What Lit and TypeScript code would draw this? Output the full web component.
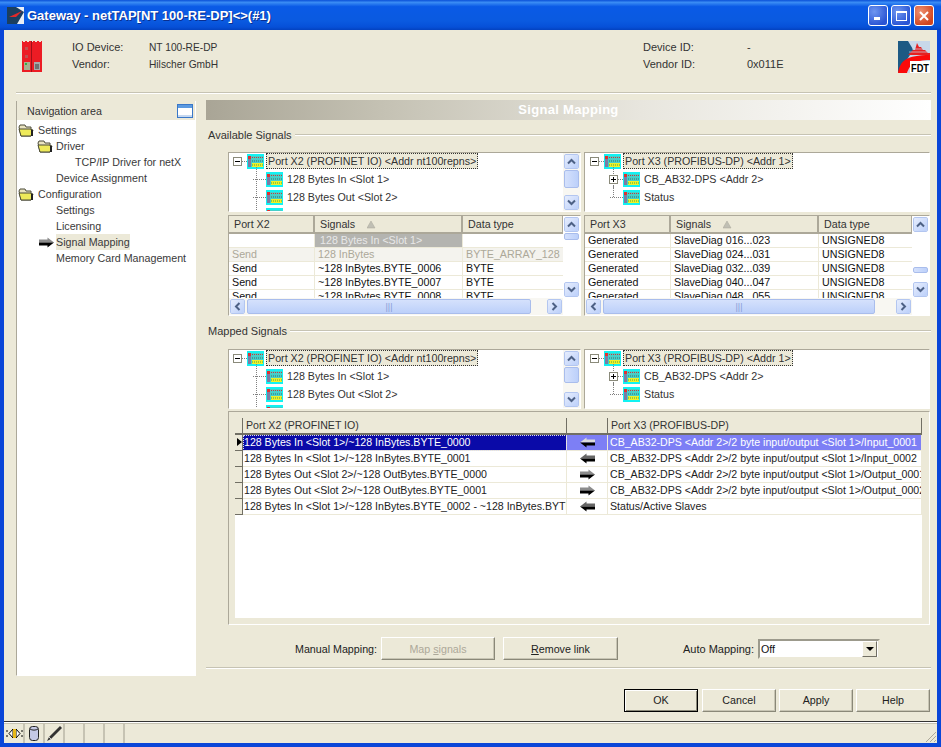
import { LitElement, html, css, svg } from "lit";
import { customElement } from "lit/decorators.js";

const chip = () => html`<svg class="chip" width="17" height="15" viewBox="0 0 17 15">
  <rect width="17" height="15" fill="#12f2f2"/>
  <rect x="1" y="2" width="15" height="11" fill="#46cfc8"/>
  <rect x="1" y="5" width="3" height="8" fill="#7c7ca4"/>
  <rect x="1" y="2" width="3" height="3" fill="#e03030"/>
  <path d="M5 3.5h11" stroke="#c83a3a" stroke-width="1" stroke-dasharray="1 1"/>
  <path d="M5 7h11" stroke="#3a6a6a" stroke-width="1" stroke-dasharray="1 1"/>
  <rect x="5" y="9" width="11" height="4" fill="#f0f028"/>
  <path d="M5 11h11" stroke="#40a848" stroke-width="1" stroke-dasharray="1 1"/>
</svg>`;

const folder = () => html`<svg class="folder" width="16" height="13" viewBox="0 0 16 13">
  <path d="M1 3 L2 1 H7 L8 3 H13 V12 H3 Z" fill="#e9e3c0" stroke="#4a4a38"/>
  <path d="M1 5 H12 L15 6 L13 12 H3 Z" fill="#eeea5a" stroke="#4a4a38"/>
  <path d="M14 6 V12" stroke="#222" stroke-width="2"/>
</svg>`;

const arrow = (dir: "l" | "r", hi = false) => html`<svg class="${dir === "r" ? "flip" : ""}" width="15" height="11" viewBox="0 0 15 11">
  <path d="M0 5.5 L6.5 .5 V2.5 H15 V5.5 Z" fill="${hi ? "#dcdcdc" : dir === "l" ? "#666" : "#8c8c8c"}"/>
  <path d="M0 5.5 L6.5 10.5 V8.5 H15 V5.5 Z" fill="#000"/>
</svg>`;

const up = () => html`<svg width="9" height="7" viewBox="0 0 9 7"><path d="M1 5.5 L4.5 2 L8 5.5" fill="none" stroke="#4d6185" stroke-width="2"/></svg>`;
const down = () => html`<svg width="9" height="7" viewBox="0 0 9 7"><path d="M1 1.5 L4.5 5 L8 1.5" fill="none" stroke="#4d6185" stroke-width="2"/></svg>`;
const left = () => html`<svg width="7" height="9" viewBox="0 0 7 9"><path d="M5.5 1 L2 4.5 L5.5 8" fill="none" stroke="#4d6185" stroke-width="2"/></svg>`;
const right = () => html`<svg width="7" height="9" viewBox="0 0 7 9"><path d="M1.5 1 L5 4.5 L1.5 8" fill="none" stroke="#4d6185" stroke-width="2"/></svg>`;

type Tree = { root: string; kids: string[]; plus: boolean };
const X2: Tree = { root: "Port X2 (PROFINET IO) <Addr nt100repns>", kids: ["128 Bytes In <Slot 1>", "128 Bytes Out <Slot 2>"], plus: false };
const X3: Tree = { root: "Port X3 (PROFIBUS-DP) <Addr 1>", kids: ["CB_AB32-DPS <Addr 2>", "Status"], plus: true };

@customElement("app-root")
export class AppRoot extends LitElement {
  static styles = css`
    :host { display: block; width: 941px; height: 747px; overflow: hidden; font-family: "Liberation Sans", Arial, sans-serif; font-size: 10.7px; color: #333; background: #0a46d8; }
    * { box-sizing: border-box; }
    .flip { transform: scaleX(-1); }
    .window { width: 941px; height: 747px; display: flex; flex-direction: column; }
    .title { height: 30px; flex: none; display: flex; align-items: center; padding: 1px 7px 0 7px; gap: 3px; color: #fff; font-weight: 700; font-size: 13px;
      background: linear-gradient(#0a50d8 0, #3a8cf4 8%, #0a5ae6 22%, #0a5ae0 70%, #0650d8 90%, #0342c0 100%); text-shadow: 1px 1px #0a2f8f; }
    .title .name { flex: 1; }
    .winbtns { display: flex; gap: 3px; }
    .wb { width: 20px; height: 21px; border: 1px solid #fff; border-radius: 3px; background: radial-gradient(circle at 30% 30%, #6f96f0, #2a55d4 75%); display: flex; align-items: center; justify-content: center; }
    .wb.close { background: radial-gradient(circle at 30% 30%, #ee9070, #d2451f 75%); }
    .frame { flex: 1; margin: 0 4px 4px 4px; background: #ece9d8; display: flex; flex-direction: column; min-height: 0; }
    .head { height: 62px; flex: none; display: grid; grid-template-columns: 18px 20px 30px 77px 494px 104px 151px 32px; padding: 11px 7px 0 0; grid-template-rows: 17px 17px; font-size: 11px; }
    .devimg { grid-column: 2; grid-row: 1 / span 2; }
    .fdt { grid-column: 8; grid-row: 1 / span 2; }
    .k { line-height: 13px; white-space: nowrap; }
    .v { font-size: 10.2px; }
    .c4 { grid-column: 4; } .c5 { grid-column: 5; } .c6 { grid-column: 6; } .c7 { grid-column: 7; }
    .r1 { grid-row: 1; } .r2 { grid-row: 2; }
    .sep { height: 2px; flex: none; background: #c6c3b3; border-bottom: 1px solid #fff; }
    .sep.m { margin: 0 6px 0 12px; }
    .main { flex: 1; display: grid; grid-template-columns: 180px 725px; column-gap: 10px; padding: 6px 0 0 12px; min-height: 0; }
    .nav { height: 575px; border: 1px solid #aca899; border-top: 0; border-right-color: #fff; border-bottom-color: #fff; background: #fff; display: flex; flex-direction: column; margin-top: 1px; }
    .navhead { height: 19px; flex: none; background: #ece9d8; display: flex; align-items: center; justify-content: space-between; padding: 0 2px 0 10px; }
    .navtree { padding-top: 2px; }
    .nr { height: 16px; display: flex; align-items: center; line-height: 16px; white-space: nowrap; color: #3a3a3a; }
    .nr.l0 { padding-left: 1px; gap: 4px; }
    .nr.l1f { padding-left: 20px; gap: 3px; }
    .nr.l1 { padding-left: 39px; }
    .nr.l2 { padding-left: 58px; }
    .nr.sel { padding-left: 22px; gap: 3px; }
    .nr.sel span { background: #ece9d8; margin-left: -1px; }
    .right { display: flex; flex-direction: column; min-width: 0; }
    .banner { height: 20px; flex: none; background: linear-gradient(90deg, #a9a596, #c5c2b4 25%, #e8e6de 60%, #fff 100%); color: #fff; font-weight: 700; font-size: 13px; text-align: center; line-height: 20px; letter-spacing: .3px; }
    .group { height: 23px; flex: none; display: flex; align-items: center; gap: 3px; padding: 6px 0 0 2px; margin-bottom: 9px; white-space: nowrap; font-size: 11px; }
    .group.second { height: 24px; }
    .group i { flex: 1; height: 2px; background: #c6c3b3; border-bottom: 1px solid #fff; }
    .pair { display: grid; grid-template-columns: 353px 346px; column-gap: 3px; margin-left: 22px; flex: none; }
    .sunk { border: 1px solid #aca899; border-right-color: #fff; border-bottom-color: #fff; background: #fff; display: flex; overflow: hidden; }
    .tree { height: 60px; margin-bottom: 3px; }
    .treebody { flex: 1; padding: 0 0 0 4px; margin-top: -1px; overflow: hidden; min-width: 0; }
    .treebody.wide { padding-left: 5px; }
    .tr { height: 18px; display: flex; align-items: center; white-space: nowrap; position: relative; }
    .ex { width: 9px; height: 9px; border: 1px solid #8a8a7a; background: #fff; position: relative; flex: none; }
    .ex::before { content: ""; position: absolute; left: 1px; right: 1px; top: 3px; height: 1px; background: #000; }
    .ex.p::after { content: ""; position: absolute; top: 1px; bottom: 1px; left: 3px; width: 1px; background: #000; }
    .dots { width: 5px; flex: none; height: 0; border-top: 1px dotted #808080; }
    .chip { flex: none; margin-right: 2px; }
    .rootlab { border: 1px dotted #333; background: #ece9d8; padding: 0 1px; height: 16px; line-height: 14px; }
    .tr.kid { padding-left: 20px; }
    .tr.kid .dots { width: 13px; }
    .tr.kid .chip { margin-right: 4px; }
    .tr.kid.ph { padding-left: 19px; }
    .tr.kid.ph .dots { width: 5px; }
    .vline { position: absolute; left: 23px; top: -3px; bottom: 0; border-left: 1px dotted #808080; }
    .tr.last .vline { bottom: 9px; }
    .vsb { width: 17px; flex: none; background: #f8f7f2; display: flex; flex-direction: column; justify-content: space-between; padding: 1px; position: relative; }
    .vsb.white { background: #fff; }
    .sb { width: 15px; height: 15px; background: linear-gradient(135deg, #e6edfd, #bcd0fa); border: 1px solid #fff; outline: 1px solid #b3c6f0; outline-offset: -1px; border-radius: 2px; display: flex; align-items: center; justify-content: center; flex: none; }
    .thumb { position: absolute; left: 1px; width: 15px; background: linear-gradient(90deg, #d5e1fc, #bcd0fa); border: 1px solid #a9bdec; border-radius: 2px; }
    .t1 { height: 101px; }
    .tab { flex-direction: column; min-width: 0; }
    .tabrow { flex: 1; display: flex; min-height: 0; }
    .tabbody { flex: 1; min-width: 0; display: flex; flex-direction: column; overflow: hidden; }
    .th { height: 18px; flex: none; display: grid; background: #ece9d8; border-bottom: 2px solid #aca899; }
    .th div { border-right: 2px solid #aca899; padding-left: 5px; line-height: 17px; white-space: nowrap; display: flex; align-items: center; }
    .th svg { margin-left: 12px; }
    .row { height: 14px; flex: none; display: grid; border-bottom: 1px solid #ece9d8; line-height: 13px; white-space: nowrap; color: #111; }
    .row div { padding-left: 3px; overflow: hidden; border-right: 1px solid #ece9d8; }
    .row.dim { color: #aca899; background: #f4f3ee; }
    .row .slot { background: #b4b4b0; color: #e8e8e8; padding-left: 5px; height: 13px; }
    .hsb { height: 17px; flex: none; display: flex; align-items: center; padding: 0 1px; gap: 2px; background: #f8f7f2; margin-right: 17px; }
    .hthumb { height: 15px; background: linear-gradient(#d5e1fc, #bcd0fa); border: 1px solid #a9bdec; border-radius: 2px; display: flex; align-items: center; justify-content: center; color: #8aa0d8; font-size: 9px; }
    .gap { flex: 1; }
    .bigp { height: 214px; margin: -1px 1px 0 22px; flex: none; border: 1px solid #aca899; border-right-color: #fff; border-bottom-color: #fff; padding: 6px; }
    .grid { height: 200px; background: #fff; width: 687px; font-size: 10.6px; }
    .gh, .gr { display: grid; grid-template-columns: 8px 324px 41px 314px; }
    .gh { height: 17px; background: #ece9d8; }
    .gh div { border-right: 1px solid #716f64; border-bottom: 2px solid #716f64; padding-left: 3px; line-height: 15px; white-space: nowrap; }
    .gr { height: 16px; line-height: 15px; white-space: nowrap; color: #222; }
    .gr > div { border-bottom: 1px solid #ece9d8; border-right: 1px solid #ece9d8; overflow: hidden; padding-left: 2px; }
    .gr > .c1 { padding-left: 1px; }
    .gr > .ar { padding: 2px 0 0 0; display: flex; justify-content: center; }
    .gr.sel .c1 { background: #0a0aa8; color: #fff; outline: 1px dotted #dde; outline-offset: -1px; }
    .gr.sel .ar, .gr.sel .c3 { background: #7d7ff5; color: #fff; }
    .gr > .rh { position: relative; background: #ece9d8; border-right: 1px solid #716f64; border-bottom: 1px solid #716f64; padding: 0; }
    .rh.cur::after { content: ""; position: absolute; left: 2px; top: 3px; border-left: 5px solid #000; border-top: 4px solid transparent; border-bottom: 4px solid transparent; }
    .actions { height: 42px; flex: none; display: flex; align-items: center; padding: 5px 0 0 89px; }
    .lab { color: #222; flex: none; }
    .lab.man { width: 86px; }
    .lab.auto { width: 75px; margin-left: 65px; font-size: 11px; }
    .btn { height: 23px; background: #ece9d8; border: 1px solid #fff; border-right-color: #8a8878; border-bottom-color: #8a8878; box-shadow: inset -1px -1px #c8c5b4; display: flex; align-items: center; justify-content: center; color: #222; flex: none; }
    .btn.dis { color: #aca899; }
    .w114 { width: 114px; } .w115 { width: 115px; margin-left: 8px; }
    .select { width: 122px; height: 20px; flex: none; border: 2px solid #9c9a8c; border-right-color: #ece9d8; border-bottom-color: #ece9d8; background: #fff; display: flex; align-items: center; justify-content: space-between; padding: 0 1px; color: #111; }
    .dd { width: 15px; height: 16px; background: #ece9d8; border: 1px solid #fff; border-right-color: #716f64; border-bottom-color: #716f64; display: flex; align-items: center; justify-content: center; }
    .dd::after { content: ""; border-top: 4px solid #000; border-left: 4px solid transparent; border-right: 4px solid transparent; }
    .foot { display: flex; justify-content: flex-end; align-items: center; gap: 3px; height: 42px; padding: 0 7px 0 0; flex: none; }
    .foot .btn { width: 74px; }
    .foot .ok { border: 1px solid #000; box-shadow: inset 1px 1px #fff, inset -1px -1px #8a8878; margin-right: 1px; }
    .mainwrap { flex: 1; display: flex; flex-direction: column; min-height: 0; }
    .statusline { height: 3px; flex: none; border-top: 1px solid #333; border-bottom: 1px solid #c6c3b3; background: #fff; }
    .status { height: 19px; flex: none; display: flex; padding: 0 0 0 1px; position: relative; }
    .cell { width: 20px; border-right: 2px solid #c6c3b3; height: 19px; display: flex; align-items: center; justify-content: center; }
    .cell.grow { flex: 1; border: 0; }
    .grip { position: absolute; right: 0; bottom: 0; }
  `;

  private vsb(thumbTop: number, thumbH: number, white = false) {
    return html`<div class="vsb ${white ? "white" : ""}">
      <div class="sb">${up()}</div>
      <div class="thumb" style="top:${thumbTop}px;height:${thumbH}px"></div>
      <div class="sb">${down()}</div>
    </div>`;
  }

  private leftTree(t: Tree, thumbH: number) {
    return html`<div class="sunk tree">
      <div class="treebody">
        <div class="tr"><span class="ex"></span><span class="dots"></span>${chip()}<span class="rootlab">${t.root}</span></div>
        <div class="tr kid"><span class="vline"></span><span class="dots"></span>${chip()}<span>${t.kids[0]}</span></div>
        <div class="tr kid"><span class="vline"></span><span class="dots"></span>${chip()}<span>${t.kids[1]}</span></div>
        <div class="tr kid"><span class="vline"></span><span class="dots"></span>${chip()}</div>
      </div>
      ${this.vsb(17, thumbH)}
    </div>`;
  }

  private rightTree(t: Tree) {
    return html`<div class="sunk tree"><div class="treebody wide">
      <div class="tr"><span class="ex"></span><span class="dots"></span>${chip()}<span class="rootlab">${t.root}</span></div>
      <div class="tr kid ph"><span class="vline"></span><span class="ex p"></span><span class="dots"></span>${chip()}<span>${t.kids[0]}</span></div>
      <div class="tr kid last"><span class="vline"></span><span class="dots"></span>${chip()}<span>${t.kids[1]}</span></div>
    </div></div>`;
  }

  private table(hdr: string, cols: string, rows: string[][], dim: number, sbTop: number, sbH: number, hw: number) {
    const tri = svg`<polygon points="0,8 4,1 8,8" fill="#c0bfb4" stroke="#a8a79a" stroke-width=".5"/>`;
    return html`<div class="sunk t1 tab">
      <div class="tabrow">
        <div class="tabbody">
          <div class="th" style="grid-template-columns:${cols}">
            <div>${hdr}</div><div>Signals<svg width="9" height="9">${tri}</svg></div><div>Data type</div>
          </div>
          ${rows.map(
            (r, i) => html`<div class="row ${i === dim ? "dim" : ""}" style="grid-template-columns:${cols}">
              <div>${r[0]}</div>
              <div class="${r[1].startsWith("128 Bytes In") ? "slot" : ""}">${r[1]}</div>
              <div>${r[2]}</div>
            </div>`
          )}
        </div>
        ${this.vsb(sbTop, sbH, true)}
      </div>
      <div class="hsb">
        <div class="sb">${left()}</div>
        <div class="hthumb" style="width:${hw}px">|||</div>
        <div class="gap"></div>
        <div class="sb">${right()}</div>
      </div>
    </div>`;
  }

  render() {
    const m = [
      ["128 Bytes In <Slot 1>/~128 InBytes.BYTE_0000", "l", "CB_AB32-DPS <Addr 2>/2 byte input/output <Slot 1>/Input_0001"],
      ["128 Bytes In <Slot 1>/~128 InBytes.BYTE_0001", "l", "CB_AB32-DPS <Addr 2>/2 byte input/output <Slot 1>/Input_0002"],
      ["128 Bytes Out <Slot 2>/~128 OutBytes.BYTE_0000", "r", "CB_AB32-DPS <Addr 2>/2 byte input/output <Slot 1>/Output_0001"],
      ["128 Bytes Out <Slot 2>/~128 OutBytes.BYTE_0001", "r", "CB_AB32-DPS <Addr 2>/2 byte input/output <Slot 1>/Output_0002"],
      ["128 Bytes In <Slot 1>/~128 InBytes.BYTE_0002 - ~128 InBytes.BYTE_0003", "l", "Status/Active Slaves"],
    ];
    const rowsL = [
      ["", "128 Bytes In <Slot 1>", ""],
      ["Send", "128 InBytes", "BYTE_ARRAY_128"],
      ["Send", "~128 InBytes.BYTE_0006", "BYTE"],
      ["Send", "~128 InBytes.BYTE_0007", "BYTE"],
      ["Send", "~128 InBytes.BYTE_0008", "BYTE"],
    ];
    const rowsR = ["016", "024", "032", "040", "048"].map((a, i) => [
      "Generated",
      `SlaveDiag ${a}...${["023", "031", "039", "047", "055"][i]}`,
      "UNSIGNED8",
    ]);
    return html`<div class="window">
      <div class="title">
        <svg width="17" height="17" viewBox="0 0 17 17">
          <rect width="17" height="17" fill="#e8eef6"/>
          <path d="M0 0 H9 L17 5 L10 17 H0 Z" fill="#1a3f60"/>
          <path d="M2 10 L15 4 L9 10 Z" fill="#e02a2a"/>
        </svg>
        <span class="name">Gateway - netTAP[NT 100-RE-DP]<>(#1)</span>
        <div class="winbtns">
          <div class="wb"><svg width="11" height="11"><rect x="1" y="7" width="6" height="3" fill="#fff"/></svg></div>
          <div class="wb"><svg width="13" height="12"><rect x="1.5" y="1.5" width="10" height="9" fill="none" stroke="#fff"/><rect x="1" y="1" width="11" height="2" fill="#fff"/></svg></div>
          <div class="wb close"><svg width="12" height="12"><path d="M2 2 L10 10 M10 2 L2 10" stroke="#fff" stroke-width="2"/></svg></div>
        </div>
      </div>
      <div class="frame">
        <div class="head">
          <svg class="devimg" width="20" height="31" viewBox="0 0 20 31">
            <path d="M0 0 h1v1h2v-1h2v1h2v-1h2v1h2v-1h2v1h2v-1h2v1h2v-1h1v31h-20z" fill="#ec1c24"/>
            <rect x="9" y="0" width="1" height="31" fill="#a01018"/>
            <rect x="3" y="6" width="3" height="3" fill="#c05050"/>
            <rect x="3" y="14" width="3" height="3" fill="#c05050"/>
            <rect x="2" y="21" width="6" height="8" fill="#a8b090"/>
            <rect x="3" y="22" width="2" height="2" fill="#30b040"/>
            <rect x="12" y="21" width="6" height="8" fill="#a8a8a8"/>
            <rect x="13" y="23" width="4" height="5" fill="#707070"/>
          </svg>
          <div class="k c4 r1">IO Device:</div>
          <div class="k c5 r1 v">NT 100-RE-DP</div>
          <div class="k c4 r2">Vendor:</div>
          <div class="k c5 r2 v">Hilscher GmbH</div>
          <div class="k c6 r1">Device ID:</div>
          <div class="k c7 r1">-</div>
          <div class="k c6 r2">Vendor ID:</div>
          <div class="k c7 r2">0x011E</div>
          <svg class="fdt" width="32" height="32" viewBox="0 0 32 32">
            <rect width="32" height="32" fill="#c8d8ea"/>
            <path d="M0 0 H10 L16 10 L12 14 L0 32 Z" fill="#1d5a84"/>
            <path d="M19 2 L21 6 H23 L25 9 H27 L30 12 H32 V14 H10 L15 9 H17 Z" fill="#e62020"/>
            <path d="M14 8 H32 M11 11 H32" stroke="#c8d8ea" stroke-width=".7"/>
            <path d="M0 32 C2 20 8 14 32 14 V19 C16 19 12 24 9 32 Z" fill="#fa0a0a"/>
            <rect x="12" y="20" width="20" height="12" fill="#fff"/>
            <text x="13" y="30.5" font-family="Liberation Sans" font-weight="700" font-size="11" fill="#000" textLength="18" lengthAdjust="spacingAndGlyphs">FDT</text>
          </svg>
        </div>
        <div class="sep m"></div>
        <div class="mainwrap">
          <div class="main">
            <div class="nav">
              <div class="navhead"><span>Navigation area</span>
                <svg width="16" height="14" viewBox="0 0 16 14"><rect x=".5" y=".5" width="15" height="13" fill="#fff" stroke="#3a78c8"/><rect x="1" y="1" width="14" height="3" fill="#5c9ae0"/><rect x="1" y="11" width="14" height="2" fill="#c6d8f0"/></svg>
              </div>
              <div class="navtree">
                <div class="nr l0">${folder()}<span>Settings</span></div>
                <div class="nr l1f">${folder()}<span>Driver</span></div>
                <div class="nr l2">TCP/IP Driver for netX</div>
                <div class="nr l1">Device Assignment</div>
                <div class="nr l0">${folder()}<span>Configuration</span></div>
                <div class="nr l1">Settings</div>
                <div class="nr l1">Licensing</div>
                <div class="nr sel">${arrow("r")}<span>Signal Mapping</span></div>
                <div class="nr l1">Memory Card Management</div>
              </div>
            </div>
            <div class="right">
              <div class="banner">Signal Mapping</div>
              <div class="group">Available Signals <i></i></div>
              <div class="pair">
                ${this.leftTree(X2, 18)}
                ${this.rightTree(X3)}
                ${this.table("Port X2", "86px 148px 101px", rowsL, 1, 17, 7, 284)}
                ${this.table("Port X3", "86px 148px 94px", rowsR, -1, 51, 6, 272)}
              </div>
              <div class="group second">Mapped Signals <i></i></div>
              <div class="pair">
                ${this.leftTree(X2, 16)}
                ${this.rightTree(X3)}
              </div>
              <div class="bigp">
                <div class="grid">
                  <div class="gh"><div></div><div>Port X2 (PROFINET IO)</div><div></div><div>Port X3 (PROFIBUS-DP)</div></div>
                  ${m.map(
                    (r, i) => html`<div class="gr ${i === 0 ? "sel" : ""}">
                      <div class="rh ${i === 0 ? "cur" : ""}"></div>
                      <div class="c1">${r[0]}</div>
                      <div class="ar">${arrow(r[1] as "l" | "r", i === 0)}</div>
                      <div class="c3">${r[2]}</div>
                    </div>`
                  )}
                </div>
              </div>
              <div class="actions">
                <span class="lab man">Manual Mapping:</span>
                <div class="btn dis w114"><span>Map <u>s</u>ignals</span></div>
                <div class="btn w115"><span><u>R</u>emove link</span></div>
                <span class="lab auto">Auto Mapping:</span>
                <div class="select"><span>Off</span><span class="dd"></span></div>
              </div>
              <div class="sep"></div>
            </div>
          </div>
          <div class="foot">
            <div class="btn ok">OK</div><div class="btn">Cancel</div><div class="btn">Apply</div><div class="btn">Help</div>
          </div>
        </div>
        <div class="statusline"></div>
        <div class="status">
          <div class="cell"><svg width="17" height="11" viewBox="0 0 17 11"><path d="M0 3 h2 M0 8 h2 M15 3 h2 M15 8 h2" stroke="#000"/><path d="M7 1 L3 5.5 L7 10 Z M10 1 L14 5.5 L10 10 Z" fill="#fff" stroke="#000"/><rect x="7" y="1" width="3" height="9" fill="#e8b818"/></svg></div>
          <div class="cell"><svg width="12" height="17" viewBox="0 0 12 17"><rect x="1.5" y="1.5" width="9" height="14" rx="3" fill="#c4c8e4" stroke="#222"/><path d="M2 4 C4 5.5 8 5.5 10 4" fill="none" stroke="#222"/></svg></div>
          <div class="cell"><svg width="17" height="17" viewBox="0 0 17 17"><path d="M1 16 L3 12 L14 1 L16 3 L5 14 Z" fill="#333"/><path d="M3 12 L5 14" stroke="#ccc"/></svg></div>
          <div class="cell"></div><div class="cell"></div><div class="cell"></div>
          <div class="cell grow"></div>
          <svg class="grip" width="12" height="12" viewBox="0 0 12 12"><path d="M11 1 L1 11 M11 5 L5 11 M11 9 L9 11" stroke="#aca899"/></svg>
        </div>
      </div>
    </div>`;
  }
}
